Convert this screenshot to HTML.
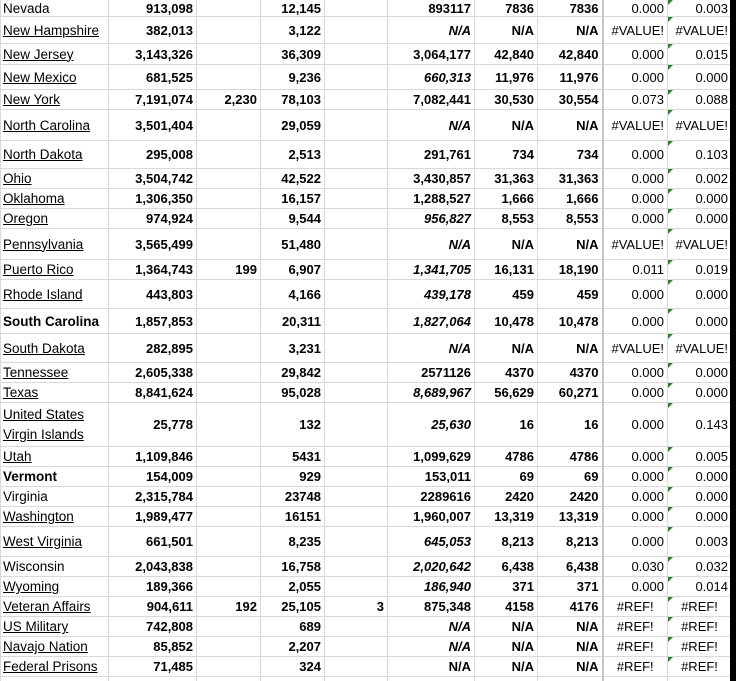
<!DOCTYPE html>
<html><head><meta charset="utf-8"><style>
html,body{margin:0;padding:0;background:#fff;width:748px;height:681px;overflow:hidden}
body{position:relative;font-family:"Liberation Sans",Arial,sans-serif;color:#000}
table{position:absolute;left:0;top:-1px;border-collapse:collapse;table-layout:fixed;width:731px}
td{border:1px solid #d9d9d9;padding:1px 3px 0 3px;vertical-align:middle;text-align:right;font-size:13px;font-weight:bold;white-space:nowrap;overflow:hidden;line-height:14px;box-sizing:border-box}
td.a{text-align:left;font-weight:normal;font-size:13.5px;padding-left:2px}
td.a.u{text-decoration:underline}
td.a.b{font-weight:bold}
td.i{font-style:italic}
td.h{border-right:2px solid #c8c8c8}
td.n{font-weight:normal;font-size:13px}
td.j{position:relative;font-weight:normal}
td.j::before{content:"";position:absolute;left:0;top:0;border-top:5px solid #208a20;border-right:5px solid transparent}
.bar{position:absolute;left:730px;top:0;width:6px;height:681px;background:#000}
</style></head><body>
<table>
<colgroup><col style="width:108px"><col style="width:88px"><col style="width:64px"><col style="width:64px"><col style="width:63px"><col style="width:87px"><col style="width:63px"><col style="width:65px"><col style="width:65px"><col style="width:64px"></colgroup>
<tr style="height:17px"><td class="a">Nevada</td><td>913,098</td><td></td><td>12,145</td><td></td><td>893117</td><td>7836</td><td class="h">7836</td><td class="n">0.000</td><td class="j">0.003</td></tr>
<tr style="height:27px"><td class="a u">New Hampshire</td><td>382,013</td><td></td><td>3,122</td><td></td><td class="i">N/A</td><td>N/A</td><td class="h">N/A</td><td class="n">#VALUE!</td><td class="j">#VALUE!</td></tr>
<tr style="height:21px"><td class="a u">New Jersey</td><td>3,143,326</td><td></td><td>36,309</td><td></td><td>3,064,177</td><td>42,840</td><td class="h">42,840</td><td class="n">0.000</td><td class="j">0.015</td></tr>
<tr style="height:25px"><td class="a u">New Mexico</td><td>681,525</td><td></td><td>9,236</td><td></td><td class="i">660,313</td><td>11,976</td><td class="h">11,976</td><td class="n">0.000</td><td class="j">0.000</td></tr>
<tr style="height:20px"><td class="a u">New York</td><td>7,191,074</td><td>2,230</td><td>78,103</td><td></td><td>7,082,441</td><td>30,530</td><td class="h">30,554</td><td class="n">0.073</td><td class="j">0.088</td></tr>
<tr style="height:31px"><td class="a u">North Carolina</td><td>3,501,404</td><td></td><td>29,059</td><td></td><td class="i">N/A</td><td>N/A</td><td class="h">N/A</td><td class="n">#VALUE!</td><td class="j">#VALUE!</td></tr>
<tr style="height:28px"><td class="a u">North Dakota</td><td>295,008</td><td></td><td>2,513</td><td></td><td>291,761</td><td>734</td><td class="h">734</td><td class="n">0.000</td><td class="j">0.103</td></tr>
<tr style="height:20px"><td class="a u">Ohio</td><td>3,504,742</td><td></td><td>42,522</td><td></td><td>3,430,857</td><td>31,363</td><td class="h">31,363</td><td class="n">0.000</td><td class="j">0.002</td></tr>
<tr style="height:20px"><td class="a u">Oklahoma</td><td>1,306,350</td><td></td><td>16,157</td><td></td><td>1,288,527</td><td>1,666</td><td class="h">1,666</td><td class="n">0.000</td><td class="j">0.000</td></tr>
<tr style="height:20px"><td class="a u">Oregon</td><td>974,924</td><td></td><td>9,544</td><td></td><td class="i">956,827</td><td>8,553</td><td class="h">8,553</td><td class="n">0.000</td><td class="j">0.000</td></tr>
<tr style="height:31px"><td class="a u">Pennsylvania</td><td>3,565,499</td><td></td><td>51,480</td><td></td><td class="i">N/A</td><td>N/A</td><td class="h">N/A</td><td class="n">#VALUE!</td><td class="j">#VALUE!</td></tr>
<tr style="height:20px"><td class="a u">Puerto Rico</td><td>1,364,743</td><td>199</td><td>6,907</td><td></td><td class="i">1,341,705</td><td>16,131</td><td class="h">18,190</td><td class="n">0.011</td><td class="j">0.019</td></tr>
<tr style="height:29px"><td class="a u">Rhode Island</td><td>443,803</td><td></td><td>4,166</td><td></td><td class="i">439,178</td><td>459</td><td class="h">459</td><td class="n">0.000</td><td class="j">0.000</td></tr>
<tr style="height:25px"><td class="a b">South Carolina</td><td>1,857,853</td><td></td><td>20,311</td><td></td><td class="i">1,827,064</td><td>10,478</td><td class="h">10,478</td><td class="n">0.000</td><td class="j">0.000</td></tr>
<tr style="height:29px"><td class="a u">South Dakota</td><td>282,895</td><td></td><td>3,231</td><td></td><td class="i">N/A</td><td>N/A</td><td class="h">N/A</td><td class="n">#VALUE!</td><td class="j">#VALUE!</td></tr>
<tr style="height:20px"><td class="a u">Tennessee</td><td>2,605,338</td><td></td><td>29,842</td><td></td><td>2571126</td><td>4370</td><td class="h">4370</td><td class="n">0.000</td><td class="j">0.000</td></tr>
<tr style="height:20px"><td class="a u">Texas</td><td>8,841,624</td><td></td><td>95,028</td><td></td><td class="i">8,689,967</td><td>56,629</td><td class="h">60,271</td><td class="n">0.000</td><td class="j">0.000</td></tr>
<tr style="height:44px"><td class="a u" style="white-space:normal;line-height:20px;padding-bottom:1px">United States Virgin Islands</td><td>25,778</td><td></td><td>132</td><td></td><td class="i">25,630</td><td>16</td><td class="h">16</td><td class="n">0.000</td><td class="j">0.143</td></tr>
<tr style="height:20px"><td class="a u">Utah</td><td>1,109,846</td><td></td><td>5431</td><td></td><td>1,099,629</td><td>4786</td><td class="h">4786</td><td class="n">0.000</td><td class="j">0.005</td></tr>
<tr style="height:20px"><td class="a b">Vermont</td><td>154,009</td><td></td><td>929</td><td></td><td>153,011</td><td>69</td><td class="h">69</td><td class="n">0.000</td><td class="j">0.000</td></tr>
<tr style="height:20px"><td class="a">Virginia</td><td>2,315,784</td><td></td><td>23748</td><td></td><td>2289616</td><td>2420</td><td class="h">2420</td><td class="n">0.000</td><td class="j">0.000</td></tr>
<tr style="height:20px"><td class="a u">Washington</td><td>1,989,477</td><td></td><td>16151</td><td></td><td>1,960,007</td><td>13,319</td><td class="h">13,319</td><td class="n">0.000</td><td class="j">0.000</td></tr>
<tr style="height:30px"><td class="a u">West Virginia</td><td>661,501</td><td></td><td>8,235</td><td></td><td class="i">645,053</td><td>8,213</td><td class="h">8,213</td><td class="n">0.000</td><td class="j">0.003</td></tr>
<tr style="height:20px"><td class="a">Wisconsin</td><td>2,043,838</td><td></td><td>16,758</td><td></td><td class="i">2,020,642</td><td>6,438</td><td class="h">6,438</td><td class="n">0.030</td><td class="j">0.032</td></tr>
<tr style="height:20px"><td class="a u">Wyoming</td><td>189,366</td><td></td><td>2,055</td><td></td><td class="i">186,940</td><td>371</td><td class="h">371</td><td class="n">0.000</td><td class="j">0.014</td></tr>
<tr style="height:20px"><td class="a u">Veteran Affairs</td><td>904,611</td><td>192</td><td>25,105</td><td>3</td><td>875,348</td><td>4158</td><td class="h">4176</td><td class="n" style="text-align:center">#REF!</td><td class="j" style="text-align:center">#REF!</td></tr>
<tr style="height:20px"><td class="a u">US Military</td><td>742,808</td><td></td><td>689</td><td></td><td class="i">N/A</td><td>N/A</td><td class="h">N/A</td><td class="n" style="text-align:center">#REF!</td><td class="j" style="text-align:center">#REF!</td></tr>
<tr style="height:20px"><td class="a u">Navajo Nation</td><td>85,852</td><td></td><td>2,207</td><td></td><td class="i">N/A</td><td>N/A</td><td class="h">N/A</td><td class="n" style="text-align:center">#REF!</td><td class="j" style="text-align:center">#REF!</td></tr>
<tr style="height:20px"><td class="a u">Federal Prisons</td><td>71,485</td><td></td><td>324</td><td></td><td>N/A</td><td>N/A</td><td class="h">N/A</td><td class="n" style="text-align:center">#REF!</td><td class="j" style="text-align:center">#REF!</td></tr>
<tr style="height:10px"><td class="a"></td><td></td><td></td><td></td><td></td><td></td><td></td><td class="h"></td><td class="n"></td><td></td></tr>
</table>
<div class="bar"></div>
</body></html>
